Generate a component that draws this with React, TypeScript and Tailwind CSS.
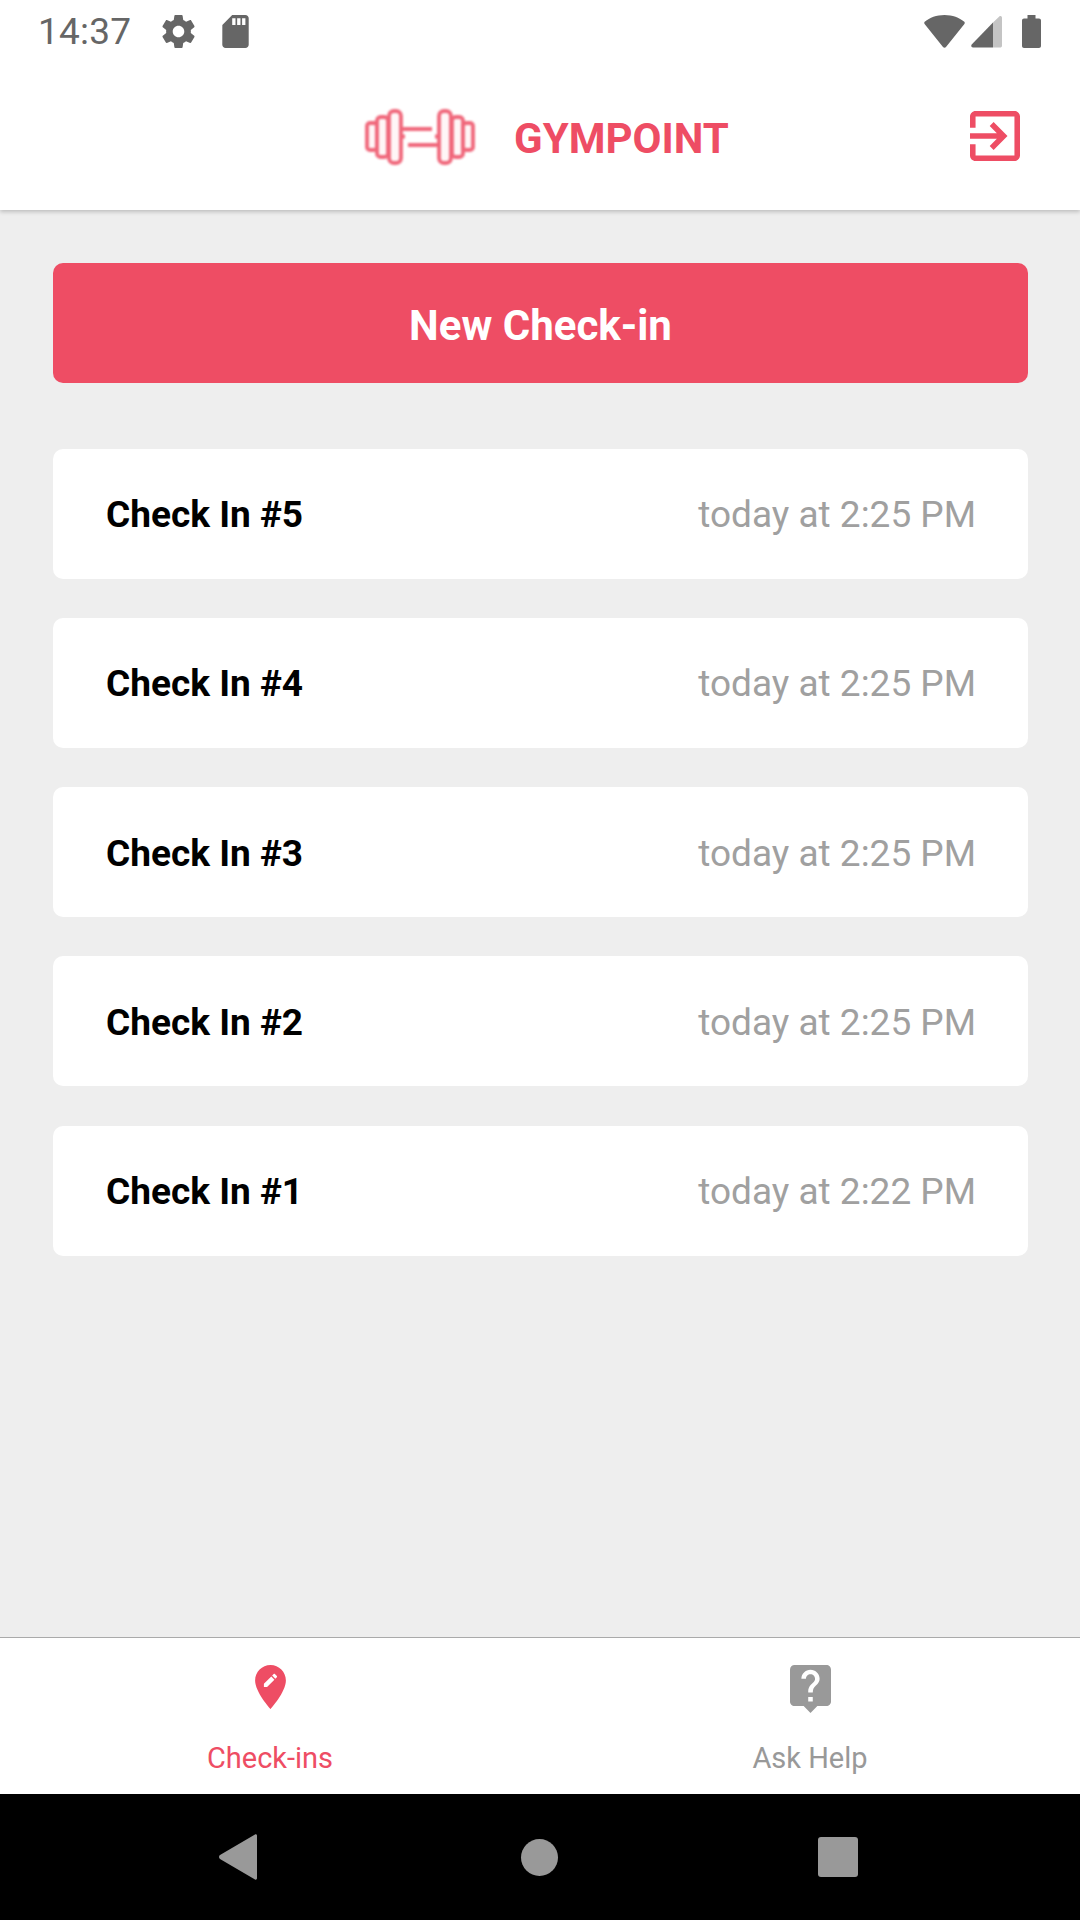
import React from 'react';

const checkIns = [
    { id: 5, time: 'today at 2:25 PM' },
    { id: 4, time: 'today at 2:25 PM' },
    { id: 3, time: 'today at 2:25 PM' },
    { id: 2, time: 'today at 2:25 PM' },
    { id: 1, time: 'today at 2:22 PM' },
];

const StatusBar = () => (
    <div className="h-[63px] bg-white flex items-center pl-[38px] pr-[39px] text-[#666666]">
        <span className="text-[37px] leading-none tracking-[0.2px]">14:37</span>
        <svg className="ml-[31px] w-[33px] h-[33px]" viewBox="2 2 20 20" fill="#666666">
            <path d="M19.43 12.98c.04-.32.07-.64.07-.98s-.03-.66-.07-.98l2.11-1.65c.19-.15.24-.42.12-.64l-2-3.46c-.12-.22-.39-.3-.61-.22l-2.49 1c-.52-.4-1.08-.73-1.69-.98l-.38-2.65C14.46 2.18 14.25 2 14 2h-4c-.25 0-.46.18-.49.42l-.38 2.65c-.61.25-1.17.59-1.69.98l-2.49-1c-.23-.09-.49 0-.61.22l-2 3.46c-.13.22-.07.49.12.64l2.11 1.65c-.04.32-.07.65-.07.98s.03.66.07.98l-2.11 1.65c-.19.15-.24.42-.12.64l2 3.46c.12.22.39.3.61.22l2.49-1c.52.4 1.08.73 1.69.98l.38 2.65c.03.24.24.42.49.42h4c.25 0 .46-.18.49-.42l.38-2.65c.61-.25 1.17-.59 1.69-.98l2.49 1c.23.09.49 0 .61-.22l2-3.46c.12-.22.07-.49-.12-.64l-2.11-1.65zM12 15.5c-1.93 0-3.5-1.57-3.5-3.5s1.57-3.5 3.5-3.5 3.5 1.57 3.5 3.5-1.57 3.5-3.5 3.5z" />
        </svg>
        <svg className="ml-[27px] w-[27px] h-[33px]" viewBox="4 2 16 20" fill="#666666">
            <path d="M18 2h-8L4.02 8 4 20c0 1.1.9 2 2 2h12c1.1 0 2-.9 2-2V4c0-1.1-.9-2-2-2zm-6 6h-2V4h2v4zm3 0h-2V4h2v4zm3 0h-2V4h2v4z" />
        </svg>
        <svg className="ml-auto w-[41px] h-[33px]" viewBox="0 0 41 33" fill="#666666">
            <path d="M20.5 0C12.5 0 5.6 2.8 1 6.6c-.9.7-1 1.7-.4 2.5L19 32c.8 1 2.2 1 3 0L40.400 9.100c.6-.8.5-1.800-.4-2.500C35.400 2.800 28.500 0 20.500 0z" />
        </svg>
        <svg className="ml-[6px] w-[31px] h-[32px]" viewBox="0 0 31 32">
            <path d="M22 6.500 0.700 28.600c-.9 1-.3 2.900 1.300 2.900h20z" fill="#666666" />
            <path d="M22 6.500 28.300.5c.8-.8 2.700-.4 2.700 1.200v28c0 1-.8 1.800-1.800 1.800H22z" fill="#c4c4c4" />
        </svg>
        <svg className="ml-[20px] w-[19px] h-[33px]" viewBox="0 0 19 33" fill="#666666">
            <path d="M5.500 0h8v3.500h3.500c1.100 0 2 .9 2 2V31c0 1.100-.9 2-2 2H2c-1.100 0-2-.9-2-2V5.500c0-1.100.9-2 2-2h3.500z" />
        </svg>
    </div>
);

const Dumbbell = () => (
    <svg className="w-[110px] h-[56px] blur-[0.8px]" viewBox="0 0 110 56" fill="#fff5f6" stroke="#ee4d64" strokeWidth="3.800" opacity="0.85">
        <rect x="2" y="14" width="10" height="27" rx="3" />
        <rect x="12" y="8" width="11" height="40" rx="3.500" />
        <rect x="24" y="2" width="12" height="52" rx="5" />
        <rect x="74" y="2" width="12" height="52" rx="5" />
        <rect x="87" y="8" width="11" height="40" rx="3.500" />
        <rect x="98" y="14" width="10" height="27" rx="3" />
        <path d="M37 20h30M43 36h30M36 27.500h4M70 27.500h4" fill="none" />
    </svg>
);

const Header = () => (
    <div className="h-[147px] bg-white flex items-center pl-[365px] pr-[60px]">
        <Dumbbell />
        <span className="ml-[39px] mt-[5px] text-[42px] leading-none font-bold text-[#ee4d64]">GYMPOINT</span>
        <svg className="ml-auto w-[50px] h-[50px] -mt-[1px]" viewBox="3 3 18 18" fill="#ee4d64">
            <path d="M10.090 15.590L11.500 17l5-5-5-5-1.410 1.410L12.670 11H3v2h9.670l-2.580 2.590zM19 3H5c-1.110 0-2 .9-2 2v4h2V5h14v14H5v-4H3v4c0 1.100.89 2 2 2h14c1.100 0 2-.9 2-2V5c0-1.100-.9-2-2-2z" />
        </svg>
    </div>
);

const CheckInRow = ({ id, time }: { id: number; time: string }) => (
    <div className="h-[130px] bg-white rounded-[10px] flex items-center justify-between pl-[53px] pr-[52px]">
        <span className="mt-[2px] text-[37px] font-bold text-black">Check In #{id}</span>
        <span className="mt-[2px] text-[37px] text-[#a0a0a0]">{time}</span>
    </div>
);

const TabBar = () => (
    <div className="h-[157px] bg-white border-t border-[#aaaaaa] grid grid-cols-2">
        <div className="flex flex-col items-center pt-[27px]">
            <svg className="w-[31px] h-[44px]" viewBox="5 2 14 20" fill="#ee4d64">
                <path d="M12 2C8.140 2 5 5.140 5 9c0 5.250 7 13 7 13s7-7.750 7-13c0-3.860-3.140-7-7-7zm-1.560 10H9v-1.440l3.350-3.340 1.430 1.430L10.440 12zm4.450-4.450l-.7.7-1.440-1.440.7-.7c.15-.15.39-.15.54 0l.9.9c.15.15.15.39 0 .54z" />
            </svg>
            <span className="mt-[31px] text-[29px] leading-[36px] text-[#ee4d64]">Check-ins</span>
        </div>
        <div className="flex flex-col items-center pt-[27px]">
            <svg className="w-[41px] h-[48px]" viewBox="3 2 18 21" fill="#999999">
                <path d="M19 2H5c-1.110 0-2 .9-2 2v14c0 1.100.89 2 2 2h4l3 3 3-3h4c1.100 0 2-.9 2-2V4c0-1.100-.9-2-2-2zm-6 16h-2v-2h2v2zm2.070-7.750l-.9.92C13.450 11.900 13 12.500 13 14h-2v-.5c0-1.100.45-2.100 1.170-2.830l1.240-1.260c.37-.36.59-.86.59-1.410 0-1.100-.9-2-2-2s-2 .9-2 2H8c0-2.210 1.790-4 4-4s4 1.790 4 4c0 .88-.36 1.680-.93 2.250z" />
            </svg>
            <span className="mt-[27px] text-[29px] leading-[36px] text-[#999999]">Ask Help</span>
        </div>
    </div>
);

const NavBar = () => (
    <div className="h-[126px] bg-black flex items-center pl-[219px]">
        <svg className="w-[38px] h-[46px]" viewBox="0 0 38 46" fill="#999999">
            <path d="M36 .5c1-.6 2 0 2 1.200v42.600c0 1.200-1 1.800-2 1.200L1 25c-1.300-.9-1.300-3 0-3.900z" />
        </svg>
        <div className="ml-[264px] w-[37px] h-[37px] rounded-full bg-[#999999]" />
        <div className="ml-[260px] w-[40px] h-[40px] rounded-[3px] bg-[#999999]" />
    </div>
);

const App = () => {
    return (
        <div className="h-[1920px] w-[1080px] flex flex-col bg-[#eeeeee] font-['Roboto',sans-serif] overflow-hidden">
            <div className="bg-white shadow-[0_2px_4px_rgba(0,0,0,0.2)]">
                <StatusBar />
                <Header />
            </div>
            <main className="flex-1 pl-[53px] pr-[52px] pt-[53px]">
                <button className="w-full h-[120px] rounded-[10px] bg-[#ee4d64] text-white text-[42px] font-bold pt-[4px]">
                    New Check-in
                </button>
                <div className="mt-[66px] flex flex-col gap-[39.15px]">
                    {checkIns.map((item) => (
                        <CheckInRow key={item.id} id={item.id} time={item.time} />
                    ))}
                </div>
            </main>
            <TabBar />
            <NavBar />
        </div>
    );
};

export default App;
